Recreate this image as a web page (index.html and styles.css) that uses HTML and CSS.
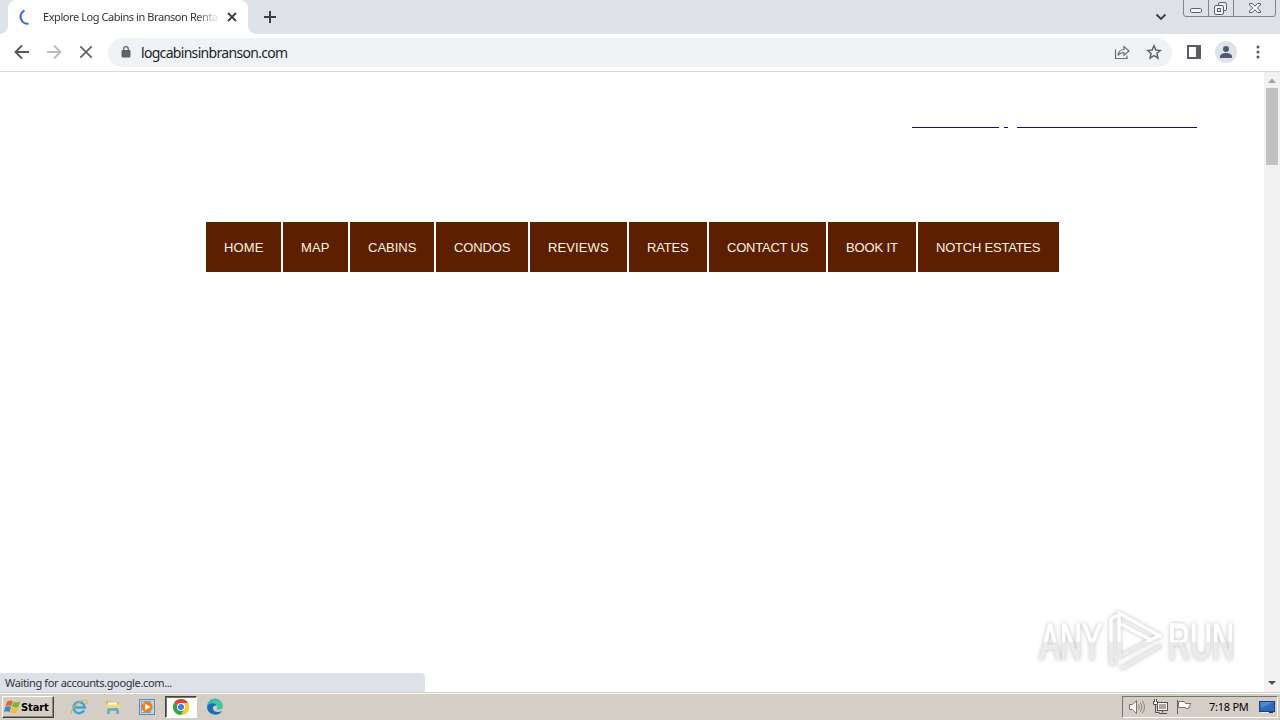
FILE: index.html
```html
<!DOCTYPE html>
<html lang="en">
<head>
    <meta charset="UTF-8">
    <meta name="viewport" content="width=device-width, initial-scale=1.0">
    <title>Explore Log Cabins in Branson Rentals</title>
    <link rel="stylesheet" href="styles.css">
</head>
<body>
<div class="tabstrip">
    <div class="tab">
        <svg class="spinner" width="16" height="16" viewBox="0 0 16 16"><path d="M5.500 1.500A7 7 0 0 0 9.500 14.700" fill="none" stroke="#3f6ad0" stroke-width="2.200"/></svg>
        <span class="tab-title">Explore Log Cabins in Branson Renta</span>
        <svg class="tab-close" width="10" height="10" viewBox="0 0 10 10"><path d="M1 1l8 8M9 1L1 9" stroke="#3c4043" stroke-width="1.800"/></svg>
    </div>
    <svg class="new-tab" width="12" height="12" viewBox="0 0 12 12"><path d="M6 0v12M0 6h12" stroke="#3c4043" stroke-width="2"/></svg>
    <svg class="tab-search" width="12" height="8" viewBox="0 0 12 8"><path d="M1.500 1.500L6 6l4.500-4.500" fill="none" stroke="#3c4043" stroke-width="1.900"/></svg>
    <div class="window-buttons">
        <svg width="94" height="18" viewBox="0 0 94 18">
            <path d="M.5 0v14q0 2.500 2.500 2.500h87q2.500 0 2.500-2.500V0M25.500 0v16M50.500 0v16" fill="none" stroke="#80848c"/>
            <g fill="#f4f5f7" stroke="#5b606a">
                <rect x="7.500" y="8.500" width="11" height="4" rx="1"/>
                <rect x="35.500" y="2.500" width="8" height="8" rx="1.500"/>
                <rect x="31.500" y="5.500" width="9" height="9" rx="1.500"/>
                <rect x="34.500" y="8.500" width="3" height="3"/>
                <path d="M66.500 3.500h3l2.500 2.700 2.500-2.700h3v1.500L74.300 8l3.200 3v1.500h-3L72 9.800l-2.500 2.700h-3V11l3.200-3-3.200-3z"/>
            </g>
        </svg>
    </div>
</div>
<div class="toolbar">
    <svg class="nav-icon" width="16" height="16" viewBox="0 0 16 16"><path d="M15 8H2M8 1.500L1.500 8 8 14.500" fill="none" stroke="#55585d" stroke-width="1.900"/></svg>
    <svg class="nav-icon" width="16" height="16" viewBox="0 0 16 16"><path d="M1 8h13M8 1.500L14.500 8 8 14.500" fill="none" stroke="#b9bbbe" stroke-width="1.900"/></svg>
    <svg class="nav-icon" width="16" height="16" viewBox="0 0 16 16"><path d="M2.300 2.300l11.400 11.400M13.700 2.300L2.300 13.700" stroke="#5f6368" stroke-width="1.800"/></svg>
    <div class="omnibox">
        <svg class="lock" width="10" height="12" viewBox="0 0 10 12"><rect x=".5" y="4" width="9" height="7.500" rx="1" fill="#5f6368"/><path d="M2.700 5V3a2.300 2.300 0 0 1 4.600 0v2" fill="none" stroke="#5f6368" stroke-width="1.300"/></svg>
        <span class="url">logcabinsinbranson.com</span>
        <svg class="share" width="16" height="16" viewBox="0 0 16 16"><path d="M1.500 5.500v9h11.500v-3" fill="none" stroke="#6b6f74" stroke-width="1.200"/><path d="M4 11.500c.4-4 2.500-6 6-6V2.500L15 7l-5 4.300V8.500c-2.700 0-4.500.8-6 3z" fill="none" stroke="#6b6f74" stroke-width="1.200"/></svg>
        <svg class="star" width="16" height="16" viewBox="0 0 16 16"><path d="M8 1.800l1.800 4.300 4.600.4-3.500 3 1.100 4.600L8 11.700l-4 2.400 1.100-4.600-3.500-3 4.600-.4z" fill="none" stroke="#5f6368" stroke-width="1.500"/></svg>
    </div>
    <svg class="panel-icon" width="14" height="14" viewBox="0 0 14 14"><rect x="1" y="1" width="12" height="12" fill="none" stroke="#5b5d63" stroke-width="2"/><path d="M9 0h5v14H9z" fill="#5b5d63"/></svg>
    <svg class="profile" width="22" height="22" viewBox="0 0 22 22"><circle cx="11" cy="11" r="11" fill="#dfe2e8"/><circle cx="11" cy="8" r="3" fill="#505a74"/><path d="M5 17v-1.500c0-2 3-3.500 6-3.500s6 1.500 6 3.500V17z" fill="#505a74"/></svg>
    <svg width="4" height="14" viewBox="0 0 4 14"><circle cx="2" cy="2" r="1.500" fill="#55585d"/><circle cx="2" cy="7" r="1.500" fill="#55585d"/><circle cx="2" cy="12" r="1.500" fill="#55585d"/></svg>
</div>
<div class="window">
    <main class="page">
        <div class="contact-line">
            <span class="line line-name"></span>
            <span class="line line-dot"></span>
            <span class="line line-domain"></span>
        </div>
        <nav class="menu">
            <a class="wide">HOME</a>
            <a class="wide">MAP</a>
            <a>CABINS</a>
            <a class="snug">CONDOS</a>
            <a class="loose">REVIEWS</a>
            <a class="snug">RATES</a>
            <a class="tight">CONTACT US</a>
            <a class="snug">BOOK IT</a>
            <a class="tight">NOTCH ESTATES</a>
        </nav>
        <svg class="watermark" width="212" height="72" viewBox="0 0 212 72">
            <defs>
                <linearGradient id="fade" gradientUnits="userSpaceOnUse" x1="0" y1="0" x2="0" y2="72">
                    <stop offset=".51" stop-color="#fff"/>
                    <stop offset=".51" stop-color="#ebebeb"/>
                </linearGradient>
            </defs>
            <g class="mark-text" fill="url(#fade)" stroke="url(#fade)">
                <text x="8" y="54" textLength="62" lengthAdjust="spacingAndGlyphs">ANY</text>
                <text x="136" y="54" textLength="66" lengthAdjust="spacingAndGlyphs">RUN</text>
            </g>
            <g fill="none" stroke="url(#fade)" stroke-width="3.500" stroke-linejoin="round" stroke-linecap="round">
                <path d="M79 58V14l5-3M87 38V8l41 23M87 46V18l32 17"/>
                <path d="M79 38v20h5M87 38v14l41-22M90 63l38-22"/>
            </g>
        </svg>
        <div class="status">Waiting for accounts.google.com...</div>
    </main>
    <div class="scrollbar">
        <svg width="16" height="16" viewBox="0 0 16 16"><path d="M4 11h8L8 6.500z" fill="#a3a3a3"/></svg>
        <div class="thumb"></div>
        <svg class="down" width="16" height="16" viewBox="0 0 16 16"><path d="M4 5h8l-4 4z" fill="#505050"/></svg>
    </div>
</div>
<div class="taskbar">
    <div class="start">
        <svg width="17" height="16" viewBox="0 0 17 16">
            <path d="M3 2.500c2-1.500 4-1.300 5.800-.3L7.300 7.200C5.500 6.200 3.500 6.200 1.500 7.200z" fill="#e7652d"/>
            <path d="M9.500 2.700c2 1 4 1 6.700-.3L14.500 7.700c-2 1.200-4.500 1-6.500 0z" fill="#79b63c"/>
            <path d="M1.200 8c2-1.200 4-1 5.800 0L5.500 13C3.500 12 2 12 0 13z" fill="#3c85cc"/>
            <path d="M7.800 8.600c2 1 4 1 6.500-.2L12.800 13.500c-2 1.200-4.500 1-6.500 0z" fill="#f5bd32"/>
        </svg>
        <span>Start</span>
    </div>
    <div class="launchers">
        <svg width="18" height="18" viewBox="0 0 18 18">
            <path d="M14 12.300A5.600 5.600 0 1 1 14.700 9.500H5" fill="none" stroke="#39a5df" stroke-width="2.500"/>
            <path d="M2 15.500C-.5 13 8 2 15 2c2.500 0 2 2.500 1 4" fill="none" stroke="#dbb44a" stroke-width="1.200"/>
        </svg>
        <svg width="18" height="18" viewBox="0 0 18 18">
            <path d="M2 3h5l1 1h7v10H2z" fill="#dcb954"/><path d="M4 4.500h9V7H4z" fill="#fff"/><path d="M2 6.500h14V14H2z" fill="#f2d880"/>
            <path d="M3 16v-4q0-2 2-2h8q2 0 2 2v4h-3v-3H6v3z" fill="#64afd6"/>
        </svg>
        <svg width="18" height="18" viewBox="0 0 18 18">
            <rect x="1.500" y="1.500" width="15" height="15" fill="#b9d7ed" stroke="#568fbd"/><rect x="3.500" y="3.500" width="9" height="11" fill="#dfedf6" stroke="#76a7cc"/>
            <circle cx="9" cy="9" r="5.500" fill="#ee8218"/><path d="M7.200 5.800v6.400L12.300 9z" fill="#fff"/>
        </svg>
        <div class="active-app">
            <svg width="16" height="16" viewBox="0 0 16 16">
                <circle cx="8" cy="8" r="8" fill="#f8ca31"/>
                <path d="M8 8L1.070 4a8 8 0 0 1 13.860 0z" fill="#dc4336"/><path d="M1.070 4A8 8 0 0 0 8 16l3.500-6L8 8z" fill="#32a450"/>
                <path d="M8 4h6.930A8 8 0 0 1 8 16l3.500-6z" fill="#f8ca31"/>
                <circle cx="8" cy="8" r="4" fill="#fff"/><circle cx="8" cy="8" r="3" fill="#4079df"/>
            </svg>
        </div>
        <svg width="18" height="18" viewBox="0 0 18 18">
            <path d="M1 9a8 8 0 0 1 16-1c0 3-2.500 4-5 3.700-2-.2-.8-1.300-1-2.700-.5-4-7-4.500-10 0z" fill="#43c69b"/>
            <path d="M1 9a8 8 0 0 1 12-6.900C8 1 3 4 1 9z" fill="#32add6"/>
            <path d="M1 9c1-4 8-5 9.500-1.500C8 7 6.500 9 7 11c1 3 5 4 9 2A8.200 8.200 0 0 1 1 9z" fill="#176eb8"/>
        </svg>
    </div>
    <div class="tray">
        <svg width="18" height="16" viewBox="0 0 18 16"><path d="M1.500 5.500h3l4-4v13l-4-4h-3z" fill="#fff" stroke="#77736d"/><path d="M10.500 5.500q1.500 2.500 0 5M12.500 3.500q3 4.500 0 9M14.500 2q4 6 0 12" fill="none" stroke="#88847e"/></svg>
        <svg width="17" height="16" viewBox="0 0 17 16"><rect x="5.500" y="3.500" width="10" height="8" fill="#fff" stroke="#55524e"/><path d="M7 5h7v5H7z" fill="#aaa7a1"/><path d="M1 1h5v5H1z" fill="#fff"/><path d="M1.500 2v3.500h4V2M2.500 0v3M4.500 0v3M3.500 5.500v8h4M10.500 11.500v2M7 14.500h8" fill="none" stroke="#55524e"/></svg>
        <svg width="18" height="16" viewBox="0 0 18 16"><path d="M2.500 15V1" stroke="#65615c"/><path d="M3.500 2.500H9l1.500 2h5.500l-2 3 1 1-3 1-2-1H3.500z" fill="#fff" stroke="#77736d"/></svg>
        <span class="clock">7:18 PM</span>
        <svg width="16" height="14" viewBox="0 0 16 14"><rect x=".5" y="1.500" width="15" height="10" fill="#2e68bd" stroke="#203e76"/><path d="M1 2h14L2 8z" fill="#4c88d1"/><path d="M2 12.500h8" stroke="#eee"/><path d="M10 12.500h4" stroke="#333"/></svg>
    </div>
</div>
</body>
</html>
```
FILE: styles.css
```css
* {
    box-sizing: border-box;
}
body {
    margin: 0;
    width: 1280px;
    height: 720px;
    overflow: hidden;
    display: flex;
    flex-direction: column;
    background-color: #fff;
    font-family: "Noto Sans", "Open Sans", sans-serif;
    font-size: 11px;
    color: #303236;
}
svg {
    display: block;
    flex-shrink: 0;
}
.tabstrip {
    display: flex;
    align-items: center;
    height: 34px;
    padding-left: 8px;
    background-color: #dee1e8;
}
.tab {
    position: relative;
    display: flex;
    align-items: center;
    width: 240px;
    height: 34px;
    padding: 0 11px;
    background-color: #fff;
    border-radius: 8px 8px 0 0;
}
.tab::before,
.tab::after {
    content: "";
    position: absolute;
    bottom: 0;
    width: 8px;
    height: 8px;
}
.tab::before {
    left: -8px;
    background: radial-gradient(circle at 0 0, #dee1e8 7.5px, #fff 8px);
}
.tab::after {
    right: -8px;
    background: radial-gradient(circle at 100% 0, #dee1e8 7.5px, #fff 8px);
}
.tab-title {
    width: 177px;
    margin-left: 8px;
    padding-bottom: 1px;
    white-space: nowrap;
    letter-spacing: -0.43px;
    -webkit-mask-image: linear-gradient(to right, #000 86%, transparent);
    mask-image: linear-gradient(to right, #000 86%, transparent);
}
.tab-close {
    margin-left: 7px;
}
.new-tab {
    margin-left: 16px;
}
.tab-search {
    margin-left: auto;
}
.window-buttons {
    align-self: flex-start;
    margin-left: 16px;
    margin-right: 3px;
}
.toolbar {
    display: flex;
    align-items: center;
    height: 38px;
    padding: 0 20px 1px 14px;
    border-bottom: 1px solid #d9dadd;
    background-color: #fff;
}
.nav-icon {
    margin-right: 16px;
}
.omnibox {
    display: flex;
    align-items: center;
    width: 1064px;
    height: 29px;
    margin-left: -2px;
    padding: 0 10px 0 13px;
    border-radius: 15px;
    background-color: #f0f3f6;
}
.url {
    margin-left: 10px;
    font-size: 14px;
    letter-spacing: -0.69px;
    color: #202227;
}
.share {
    margin-left: auto;
    margin-right: 16px;
}
.panel-icon {
    margin-left: 15px;
}
.profile {
    margin-left: 14px;
    margin-right: 19px;
}
.window {
    display: flex;
    height: 620px;
}
.page {
    position: relative;
    width: 1264px;
    padding-top: 55px;
}
.contact-line {
    display: flex;
    height: 1px;
    margin-left: 912px;
}
.line {
    background-color: #120c7c;
}
.line-name {
    width: 87px;
}
.line-dot {
    width: 4px;
    margin-left: 5px;
}
.line-domain {
    width: 180px;
    margin-left: 9px;
}
.menu {
    display: grid;
    grid-template-columns: 75px 65px 84px 92px 97px 78px 117px 88px 141px;
    gap: 2px;
    margin: 94px 0 0 206px;
}
.menu a {
    height: 50px;
    padding-left: 18px;
    background-color: #5c1f00;
    color: #fff3df;
    font: 13px/51px "Liberation Sans", Arial, sans-serif;
    white-space: nowrap;
}
.menu .wide {
    letter-spacing: 0.1px;
}
.menu .loose {
    letter-spacing: 0.1px;
}
.menu .snug {
    letter-spacing: -0.15px;
}
.menu .tight {
    letter-spacing: -0.22px;
}
.watermark {
    position: absolute;
    right: 20px;
    bottom: 15px;
    filter: drop-shadow(0 0 2px #bdbdbd);
}
.mark-text {
    font: 50px "Liberation Sans", Arial, sans-serif;
    stroke-width: 1.5px;
}
.status {
    position: absolute;
    left: 0;
    bottom: 0;
    width: 425px;
    height: 19px;
    padding-left: 5px;
    border-radius: 0 4px 0 0;
    background-color: #dee1e8;
    line-height: 20px;
    letter-spacing: -0.36px;
}
.scrollbar {
    display: flex;
    flex-direction: column;
    width: 16px;
    background-color: #f1f1f1;
}
.thumb {
    width: 12px;
    height: 77px;
    margin-left: 2px;
    background-color: #c1c1c1;
}
.down {
    margin-top: auto;
}
.taskbar {
    display: flex;
    align-items: center;
    height: 28px;
    padding: 1px 2px 0;
    border-top: 1px solid #d4d0c8;
    box-shadow: inset 0 1px #fff;
    background-color: #d5cec6;
}
.start {
    display: flex;
    align-items: center;
    width: 52px;
    height: 22px;
    padding-left: 1px;
    border: 1px solid;
    border-color: #fff #45423e #45423e #fff;
    box-shadow: inset -1px -1px #8b8680;
    font: bold 11px "DejaVu Sans Condensed", "DejaVu Sans", sans-serif;
    letter-spacing: -0.1px;
    color: #000;
}
.launchers {
    display: flex;
    align-items: center;
    gap: 16px;
    margin-left: 16px;
}
.active-app {
    display: flex;
    align-items: center;
    justify-content: center;
    width: 32px;
    height: 22px;
    margin: 0 -7px;
    border: 1px solid;
    border-color: #45423e #fff #fff #45423e;
    box-shadow: inset 1px 1px #77736d;
    background-color: #fff;
}
.tray {
    display: flex;
    align-items: center;
    width: 156px;
    height: 22px;
    margin-left: auto;
    padding-left: 5px;
    gap: 6px;
    border: 1px solid;
    border-color: #77736d #fff #fff #77736d;
}
.clock {
    width: 41px;
    margin-left: 10px;
    margin-right: 3px;
    padding-bottom: 1px;
    white-space: nowrap;
    letter-spacing: -0.25px;
    color: #000;
}
```
